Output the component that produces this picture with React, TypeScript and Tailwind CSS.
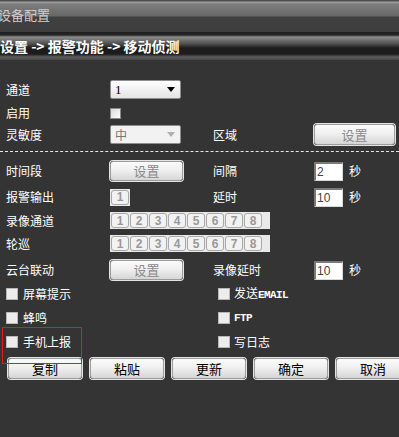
const cn = '"Noto Sans CJK SC", "Liberation Sans", sans-serif';

function GrayButton({ label, w, dim }: { label: string; w: string; dim?: boolean }) {
  return (
    <div
      className={`${w} flex h-full items-center justify-center rounded-[3px] border border-[#9c9c9c] bg-[linear-gradient(to_bottom,#fbfbfb,#f0f0f0_45%,#d6d6d6)] text-[13px] shadow-[0_0_0_1px_#e4e4e4] ${
        dim ? "text-[#8a8a8a]" : "text-black"
      }`}
    >
      {label}
    </div>
  );
}

function Select({ value, disabled }: { value: string; disabled?: boolean }) {
  return (
    <div
      className={`flex h-[19px] w-[71px] items-center justify-between rounded-[2px] border border-[#8e8e8e] pr-[5px] pl-[4px] ${
        disabled ? "bg-[#f2f2f2] text-[#777]" : "bg-[linear-gradient(to_bottom,#ffffff,#e4e4e4)] text-black"
      }`}
    >
      <span className={disabled ? "text-[12px]" : "font-['Liberation_Serif'] text-[13px]"}>{value}</span>
      <svg width="8" height="5" viewBox="0 0 8 5">
        <path d="M0 0h8L4 5z" fill={disabled ? "#b0b0b0" : "#000"} />
      </svg>
    </div>
  );
}

function NumInput({ value }: { value: string }) {
  return (
    <div className="flex h-[19px] w-[29px] items-center border-t-2 border-l-2 border-t-[#7a7a7a] border-l-[#7a7a7a] border-r border-b border-r-[#d8d8d8] border-b-[#d8d8d8] bg-white pl-[1px] font-['Liberation_Sans'] text-[12px] text-[#444]">
      {value}
    </div>
  );
}

function NumBoxes({ count }: { count: number }) {
  return (
    <div className="flex h-[17px] gap-[1px] bg-[#e9e9e9] p-[1px]">
      {Array.from({ length: count }, (_, i) => (
        <div
          key={i}
          className="flex w-[18px] items-center justify-center rounded-[3px] border border-[#a8a8a8] bg-[#f2f2f2] font-['Liberation_Sans'] text-[12px] font-bold text-[#999]"
        >
          {i + 1}
        </div>
      ))}
    </div>
  );
}

function Check({ big }: { big?: boolean }) {
  return (
    <div
      className={`${big ? "h-[12px] w-[12px] border-[#b8b8b8] bg-[#ececec]" : "h-[11px] w-[11px] border-[#8a8a8a] bg-[linear-gradient(135deg,#d8d8d8,#ffffff)]"} border`}
    />
  );
}

function Row({
  h,
  mt,
  label,
  control,
  label2,
  control2,
}: {
  h: string;
  mt: string;
  label: string;
  control?: React.ReactNode;
  label2?: string;
  control2?: React.ReactNode;
}) {
  return (
    <div className={`flex items-center pl-[6px] ${h} ${mt}`}>
      <div className="w-[104px]">{label}</div>
      <div className="flex h-full w-[103px] items-center">{control}</div>
      <div className="w-[101px]">{label2}</div>
      <div className="flex h-full items-center">{control2}</div>
    </div>
  );
}

function CheckRow({ mt, left, right }: { mt: string; left: React.ReactNode; right: React.ReactNode }) {
  return (
    <div className={`flex h-[20px] items-center pl-[6px] ${mt}`}>
      <div className="flex w-[212px] items-center gap-[5px]">
        <Check big />
        {left}
      </div>
      <div className="flex items-center gap-[4px]">
        <Check big />
        {right}
      </div>
    </div>
  );
}

export default function App() {
  const sec = <span className="ml-[6px] text-white">秒</span>;
  const ascii = "font-['Liberation_Mono'] text-[11px] font-bold tracking-[-0.6px]";
  const wide = (
    <div className="w-[103px] overflow-visible">
      <div className="w-[160px]">
        <NumBoxes count={8} />
      </div>
    </div>
  );

  return (
    <div
      className="relative h-[437px] w-[399px] overflow-hidden bg-[#343434] text-[12px] text-white"
      style={{ fontFamily: cn }}
    >
      <div className="flex h-[32px] items-center bg-[linear-gradient(to_bottom,#4e4e4e_0px,#4e4e4e_1px,#a2a2a2_2px,#7e7e7e_4px,#686868_16px,#404040_17px,#3e3e3e_32px)] pb-[2px]">
        <span className="ml-[-2px] text-[13px] text-[#cfcfcf]">设备配置</span>
      </div>
      <div className="flex h-[28px] items-center bg-[linear-gradient(to_bottom,#1e1e1e_0px,#262626_3px,#5a5a5a_4px,#8c8c8c_5px,#4c4c4c_12px,#1c1c1c_16px,#1c1c1c_22px,#5c5c5c_25px,#444444_28px)]">
        <span className="text-[14px] font-bold text-white">设置 -&gt; 报警功能 -&gt; 移动侦测</span>
      </div>

      <Row h="h-[21px]" mt="mt-[19px]" label="通道" control={<Select value="1" />} />
      <Row h="h-[20px]" mt="mt-[3px]" label="启用" control={<Check />} />
      <Row
        h="h-[21px]"
        mt="mt-[1px]"
        label="灵敏度"
        control={<Select value="中" disabled />}
        label2="区域"
        control2={<GrayButton label="设置" w="w-[81px]" dim />}
      />
      <div className="mt-[6px] border-t border-dashed border-[#e8e8e8]" />
      <Row
        h="h-[20px]"
        mt="mt-[9px]"
        label="时间段"
        control={<GrayButton label="设置" w="w-[73px]" dim />}
        label2="间隔"
        control2={
          <>
            <NumInput value="2" />
            {sec}
          </>
        }
      />
      <Row
        h="h-[20px]"
        mt="mt-[6px]"
        label="报警输出"
        control={<NumBoxes count={1} />}
        label2="延时"
        control2={
          <>
            <NumInput value="10" />
            {sec}
          </>
        }
      />
      <Row h="h-[17px]" mt="mt-[5px]" label="录像通道" control={wide} />
      <Row h="h-[17px]" mt="mt-[6px]" label="轮巡" control={wide} />
      <Row
        h="h-[20px]"
        mt="mt-[8px]"
        label="云台联动"
        control={<GrayButton label="设置" w="w-[73px]" dim />}
        label2="录像延时"
        control2={
          <>
            <NumInput value="10" />
            {sec}
          </>
        }
      />
      <CheckRow
        mt="mt-[4px]"
        left={<span>屏幕提示</span>}
        right={
          <span>
            发送<span className={ascii}>EMAIL</span>
          </span>
        }
      />
      <CheckRow mt="mt-[4px]" left={<span>蜂鸣</span>} right={<span className={ascii}>FTP</span>} />
      <CheckRow mt="mt-[4px]" left={<span>手机上报</span>} right={<span>写日志</span>} />

      <div className="mt-[6px] flex h-[21px] gap-[8px] pl-[8px]">
        {["复制", "粘贴", "更新", "确定", "取消"].map((b) => (
          <div key={b} className="h-full shrink-0">
            <GrayButton label={b} w="w-[74px]" />
          </div>
        ))}
      </div>

      <div className="pointer-events-none absolute top-[327px] left-[2px] z-10 h-[37px] w-[80px] border-[1px] border-solid border-[#e31b1b]" />
    </div>
  );
}
